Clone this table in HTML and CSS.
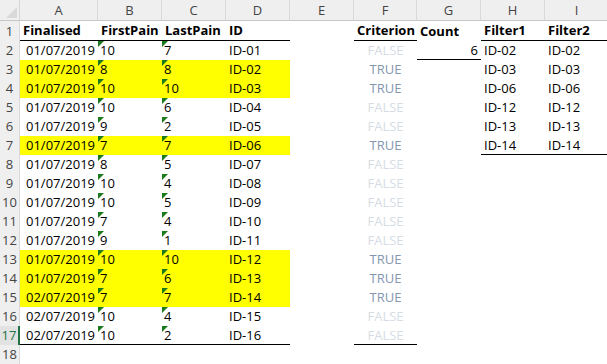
FILE: index.html
```html
<!DOCTYPE html>
<html>
<head>
<meta charset="utf-8">
<link rel="stylesheet" href="styles.css">
</head>
<body>
<div class="sheet">
  <div class="corner"></div>
  <div class="ch">A</div><div class="ch">B</div><div class="ch">C</div><div class="ch">D</div><div class="ch">E</div><div class="ch">F</div><div class="ch">G</div><div class="ch">H</div><div class="ch">I</div>

  <div class="rh r1">1</div>
  <div class="c b bb r1">Finalised</div><div class="c b bb r1">FirstPain</div><div class="c b bb r1">LastPain</div><div class="c b bb r1">ID</div><div class="c r1"></div><div class="c b bb r1">Criterion</div><div class="c b r1">Count</div><div class="c b bb r1">Filter1</div><div class="c b bb r1">Filter2</div>

  <div class="rh">2</div>
  <div class="c rt">01/07/2019</div><div class="c tri">10</div><div class="c tri">7</div><div class="c">ID-01</div><div class="c"></div><div class="c ct f">FALSE</div><div class="c rt bb">6</div><div class="c">ID-02</div><div class="c">ID-02</div>

  <div class="rh">3</div>
  <div class="c rt y">01/07/2019</div><div class="c tri y">8</div><div class="c tri y">8</div><div class="c y">ID-02</div><div class="c"></div><div class="c ct t">TRUE</div><div class="c"></div><div class="c">ID-03</div><div class="c">ID-03</div>

  <div class="rh">4</div>
  <div class="c rt y">01/07/2019</div><div class="c tri y">10</div><div class="c tri y">10</div><div class="c y">ID-03</div><div class="c"></div><div class="c ct t">TRUE</div><div class="c"></div><div class="c">ID-06</div><div class="c">ID-06</div>

  <div class="rh">5</div>
  <div class="c rt">01/07/2019</div><div class="c tri">10</div><div class="c tri">6</div><div class="c">ID-04</div><div class="c"></div><div class="c ct f">FALSE</div><div class="c"></div><div class="c">ID-12</div><div class="c">ID-12</div>

  <div class="rh">6</div>
  <div class="c rt">01/07/2019</div><div class="c tri">9</div><div class="c tri">2</div><div class="c">ID-05</div><div class="c"></div><div class="c ct f">FALSE</div><div class="c"></div><div class="c">ID-13</div><div class="c">ID-13</div>

  <div class="rh">7</div>
  <div class="c rt y">01/07/2019</div><div class="c tri y">7</div><div class="c tri y">7</div><div class="c y">ID-06</div><div class="c"></div><div class="c ct t">TRUE</div><div class="c"></div><div class="c bb">ID-14</div><div class="c bb">ID-14</div>

  <div class="rh">8</div>
  <div class="c rt">01/07/2019</div><div class="c tri">8</div><div class="c tri">5</div><div class="c">ID-07</div><div class="c"></div><div class="c ct f">FALSE</div><div class="c"></div><div class="c"></div><div class="c"></div>

  <div class="rh">9</div>
  <div class="c rt">01/07/2019</div><div class="c tri">10</div><div class="c tri">4</div><div class="c">ID-08</div><div class="c"></div><div class="c ct f">FALSE</div><div class="c"></div><div class="c"></div><div class="c"></div>

  <div class="rh">10</div>
  <div class="c rt">01/07/2019</div><div class="c tri">10</div><div class="c tri">5</div><div class="c">ID-09</div><div class="c"></div><div class="c ct f">FALSE</div><div class="c"></div><div class="c"></div><div class="c"></div>

  <div class="rh">11</div>
  <div class="c rt">01/07/2019</div><div class="c tri">7</div><div class="c tri">4</div><div class="c">ID-10</div><div class="c"></div><div class="c ct f">FALSE</div><div class="c"></div><div class="c"></div><div class="c"></div>

  <div class="rh">12</div>
  <div class="c rt">01/07/2019</div><div class="c tri">9</div><div class="c tri">1</div><div class="c">ID-11</div><div class="c"></div><div class="c ct f">FALSE</div><div class="c"></div><div class="c"></div><div class="c"></div>

  <div class="rh">13</div>
  <div class="c rt y">01/07/2019</div><div class="c tri y">10</div><div class="c tri y">10</div><div class="c y">ID-12</div><div class="c"></div><div class="c ct t">TRUE</div><div class="c"></div><div class="c"></div><div class="c"></div>

  <div class="rh">14</div>
  <div class="c rt y">01/07/2019</div><div class="c tri y">7</div><div class="c tri y">6</div><div class="c y">ID-13</div><div class="c"></div><div class="c ct t">TRUE</div><div class="c"></div><div class="c"></div><div class="c"></div>

  <div class="rh">15</div>
  <div class="c rt y">02/07/2019</div><div class="c tri y">7</div><div class="c tri y">7</div><div class="c y">ID-14</div><div class="c"></div><div class="c ct t">TRUE</div><div class="c"></div><div class="c"></div><div class="c"></div>

  <div class="rh">16</div>
  <div class="c rt">02/07/2019</div><div class="c tri">10</div><div class="c tri">4</div><div class="c">ID-15</div><div class="c"></div><div class="c ct f">FALSE</div><div class="c"></div><div class="c"></div><div class="c"></div>

  <div class="rh sel">17</div>
  <div class="c rt bb">02/07/2019</div><div class="c tri bb">10</div><div class="c tri bb">2</div><div class="c bb">ID-16</div><div class="c"></div><div class="c ct f bb">FALSE</div><div class="c"></div><div class="c"></div><div class="c"></div>

  <div class="rh">18</div>
  <div class="c"></div><div class="c"></div><div class="c"></div><div class="c"></div><div class="c"></div><div class="c"></div><div class="c"></div><div class="c"></div><div class="c"></div>
</div>
</body>
</html>
```
FILE: styles.css
```css
html, body {
  margin: 0;
  padding: 0;
  background: #ffffff;
  overflow: hidden;
}
.sheet {
  display: grid;
  grid-template-columns: 20px 78px 64px 64px 64px 64px 63px 64px 64px 64px;
  grid-template-rows: 21px 20px repeat(17, 19px);
  width: 609px;
  font-family: "Open Sans", "Liberation Sans", sans-serif;
  font-size: 13px;
  color: #000;
}
.corner {
  background: #efefef;
  border-bottom: 1px solid #c6c6c6;
  border-right: 1px solid #d6d6d6;
  box-sizing: border-box;
  position: relative;
}
.corner::after {
  content: "";
  position: absolute;
  right: 2px;
  bottom: 2px;
  width: 0;
  height: 0;
  border-left: 11px solid transparent;
  border-bottom: 11px solid #d9d9d9;
}
.ch {
  background: #efefef;
  border-bottom: 1px solid #c6c6c6;
  border-right: 1px solid #d9d9d9;
  box-sizing: border-box;
  text-align: center;
  line-height: 20px;
  color: #444;
}
.rh {
  background: #efefef;
  border-right: 1px solid #d9d9d9;
  box-sizing: border-box;
  text-align: center;
  line-height: 19px;
  color: #444;
}
.rh.r1 { line-height: 20px; }
.rh.sel {
  background: #e2e2e2;
  border-right: 2px solid #217346;
  color: #217346;
}
.c {
  box-sizing: border-box;
  padding: 0 3px;
  line-height: 19px;
  white-space: nowrap;
  overflow: hidden;
  position: relative;
}
.c.r1 { line-height: 20px; }
.b { font-weight: bold; }
.bb { border-bottom: 1px solid #000; }
.r1.bb { line-height: 19px; }
.rt { text-align: right; }
.ct { text-align: center; }
.y { background: #ffff00; }
.f { color: #d6dce4; }
.t { color: #8497b0; }
.tri { padding-left: 2px; }
.tri::before {
  content: "";
  position: absolute;
  left: 0;
  top: 0;
  width: 0;
  height: 0;
  border-top: 6px solid #1b7a1b;
  border-right: 6px solid transparent;
}
```
